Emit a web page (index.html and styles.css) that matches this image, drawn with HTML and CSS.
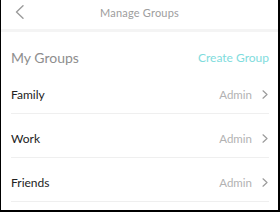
FILE: index.html
```html
<!DOCTYPE html>
<html>
<head>
<meta charset="utf-8">
<link rel="stylesheet" href="styles.css">
</head>
<body>
<div class="app">
  <header class="topbar">
    <button class="back" aria-label="Back">
      <svg width="9" height="14" viewBox="0 0 9 14"><path d="M8 0.8 L1.5 7 L8 13.2" fill="none" stroke="#9b9b9b" stroke-width="1.4" stroke-linecap="round" stroke-linejoin="round"/></svg>
    </button>
    <h1 class="title">Manage Groups</h1>
    <span class="spacer"></span>
  </header>
  <div class="band"></div>
  <div class="section-head">
    <h2 class="section-title">My Groups</h2>
    <a class="create">Create Group</a>
  </div>
  <ul class="list">
    <li class="row"><span class="name">Family</span><span class="role">Admin</span><svg class="chev" width="6" height="9" viewBox="0 0 6 9"><path d="M1 0.8 L5 4.5 L1 8.2" fill="none" stroke="#9b9b9b" stroke-width="1.2" stroke-linecap="round" stroke-linejoin="round"/></svg></li>
    <li class="row"><span class="name">Work</span><span class="role">Admin</span><svg class="chev" width="6" height="9" viewBox="0 0 6 9"><path d="M1 0.8 L5 4.5 L1 8.2" fill="none" stroke="#9b9b9b" stroke-width="1.2" stroke-linecap="round" stroke-linejoin="round"/></svg></li>
    <li class="row"><span class="name">Friends</span><span class="role">Admin</span><svg class="chev" width="6" height="9" viewBox="0 0 6 9"><path d="M1 0.8 L5 4.5 L1 8.2" fill="none" stroke="#9b9b9b" stroke-width="1.2" stroke-linecap="round" stroke-linejoin="round"/></svg></li>
  </ul>
</div>
</body>
</html>
```
FILE: styles.css
```css
* { box-sizing: border-box; }
html, body { margin: 0; padding: 0; background: #fff; }
body { font-family: Lato, "Noto Sans", sans-serif; }
.app {
  width: 280px;
  height: 212px;
  border-left: 1px solid #000;
  border-right: 2px solid #000;
  border-bottom: 2px solid #000;
  overflow: hidden;
  background: #fff;
}
.topbar {
  height: 29px;
  display: grid;
  grid-template-columns: 1fr auto 1fr;
  align-items: center;
}
.back {
  justify-self: start;
  margin-left: 14px;
  padding: 0;
  border: 0;
  background: none;
  display: flex;
  margin-top: -5px;
}
.title {
  margin: 0;
  font-size: 11px;
  font-weight: 400;
  color: #9d9d9d;
  margin-top: -4px;
  letter-spacing: 0.2px;
}
.band { height: 3px; background: #f4f4f4; }
.section-head {
  display: flex;
  justify-content: space-between;
  align-items: center;
  padding: 18px 9px 4px 10px;
  height: 38px;
}
.section-title {
  margin: 0;
  font-size: 14px;
  line-height: 16px;
  font-weight: 400;
  color: #8e8e8e;
}
.create {
  font-size: 12px;
  line-height: 16px;
  color: #7fdcdd;
}
.list {
  list-style: none;
  margin: 0;
  padding: 0 9px 0 10px;
}
.row {
  height: 44px;
  padding-top: 5px;
  display: flex;
  align-items: center;
  border-bottom: 1px solid #efefef;
}
.name {
  flex: 1;
  font-size: 12px;
  color: #222;
}
.role {
  font-size: 11.5px;
  color: #b2b2b2;
  margin-right: 10px;
}
.chev { margin-right: 1px; }
```
